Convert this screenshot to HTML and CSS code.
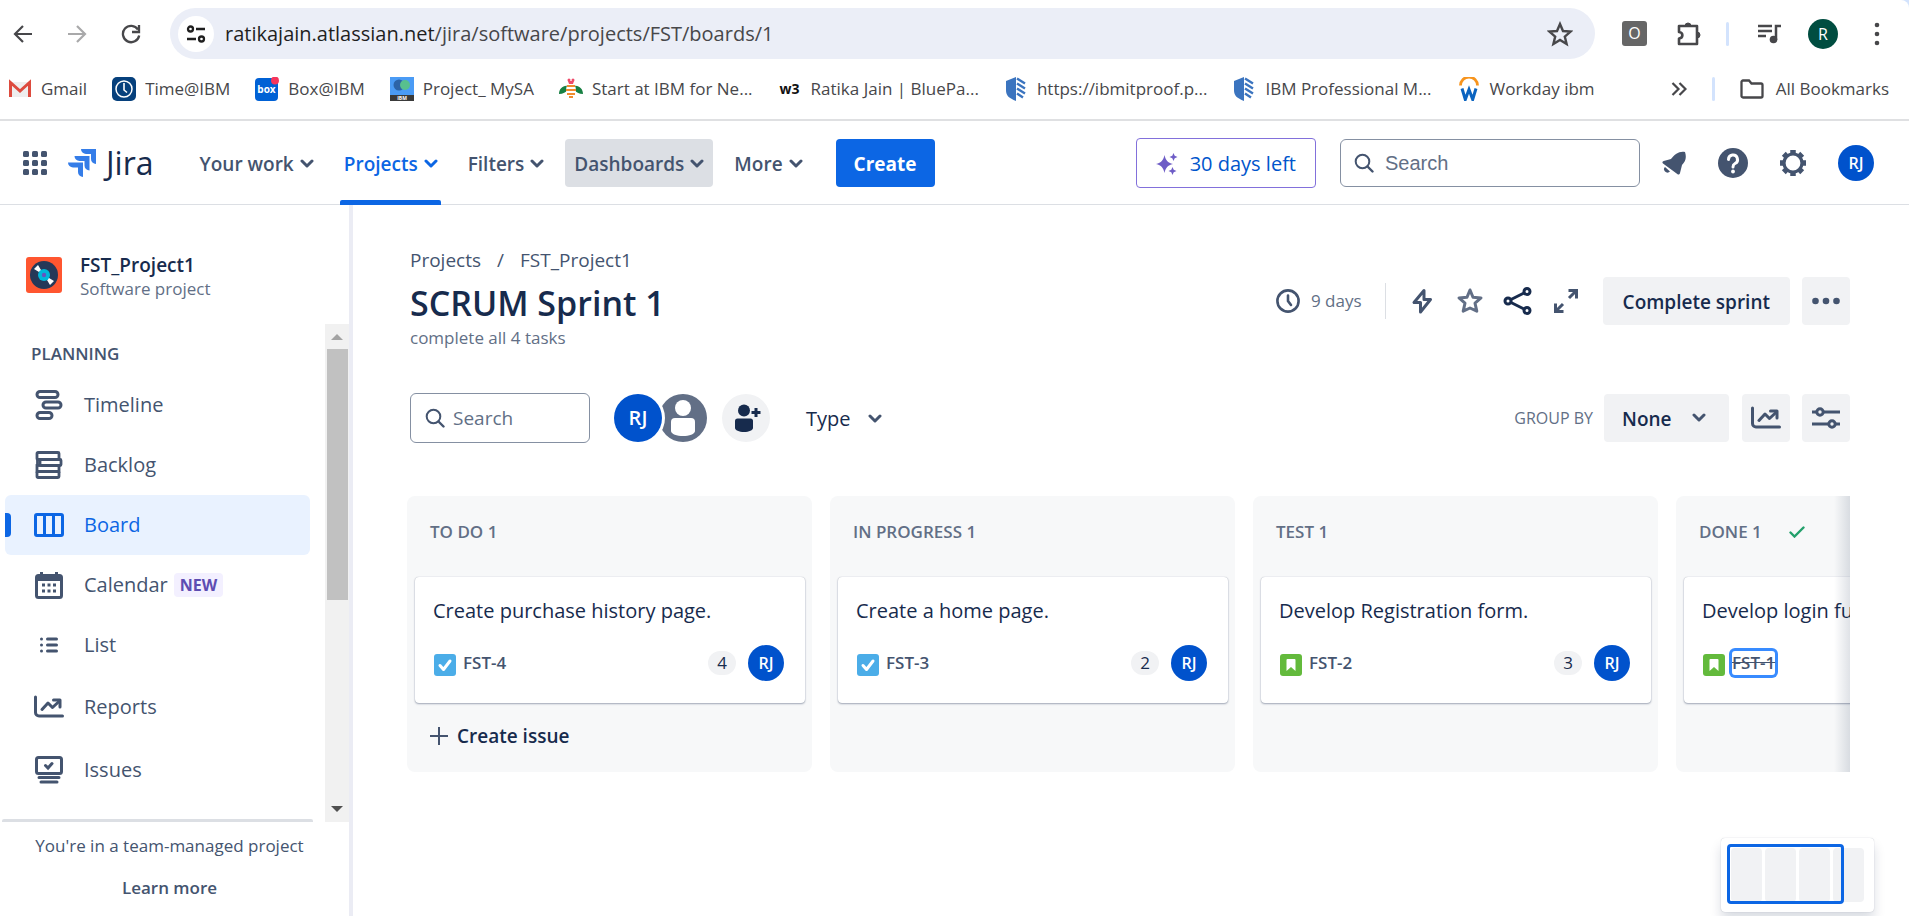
FILE: index.html
```html
<!DOCTYPE html>
<html lang="en">
<head>
<meta charset="utf-8">
<title>SCRUM Sprint 1 - Jira</title>
<link rel="stylesheet" href="styles.css">
</head>
<body>
<svg class="defs" aria-hidden="true">
  <symbol id="chev" viewBox="0 0 14 10"><path d="M2 2l5 5 5-5" fill="none" stroke="currentColor" stroke-width="3" stroke-linecap="round" stroke-linejoin="round"/></symbol>
  <symbol id="mag" viewBox="0 0 20 20"><circle cx="8.5" cy="8.5" r="6.8" fill="none" stroke="currentColor" stroke-width="2"/><path d="M13.5 13.5l5 5" stroke="currentColor" stroke-width="2.4" stroke-linecap="round"/></symbol>
  <symbol id="shield" viewBox="0 0 24 24"><path d="M12 0v24C5 21 2 19 2 13V4z" fill="#3b74bf"/><path d="M13 1.500l8 5M13 6.500l8 5M13 11.500l8 5M13 16.500l6 4" stroke="#3b74bf" stroke-width="2.400"/></symbol>
  <symbol id="chart" viewBox="0 0 30 24"><path d="M1.500 2v15.500a3.500 3.500 0 0 0 3.500 3.500H28.500M8 14.500l6-6.500 4.500 4.500L25.500 6" fill="none" stroke="currentColor" stroke-width="3" stroke-linecap="round" stroke-linejoin="round"/><path d="M19.500 5H26v7" fill="none" stroke="currentColor" stroke-width="3" stroke-linecap="round" stroke-linejoin="round"/></symbol>
  <symbol id="task" viewBox="0 0 22 22"><rect width="22" height="22" rx="3" fill="#4bade8"/><path d="M6 11.500l3.500 4L16 7" fill="none" stroke="#fff" stroke-width="3" stroke-linecap="round" stroke-linejoin="round"/></symbol>
  <symbol id="story" viewBox="0 0 22 22"><rect width="22" height="22" rx="3" fill="#63ba3c"/><path d="M6.500 6a1 1 0 0 1 1-1h7a1 1 0 0 1 1 1v11L11 13l-4.500 4z" fill="#fff"/></symbol>
</svg>

<header class="browser">
  <div class="toolbar">
    <div class="history">
      <button class="plain" aria-label="Back"><svg width="20" height="20" viewBox="0 0 20 20"><path d="M19 10H2.500M10 2L2 10l8 8" fill="none" stroke="#47474a" stroke-width="2.200"/></svg></button>
      <button class="plain" aria-label="Forward"><svg width="20" height="20" viewBox="0 0 20 20"><path d="M1 10h16.500M10 2l8 8-8 8" fill="none" stroke="#a9a9aa" stroke-width="2.200"/></svg></button>
      <button class="plain" aria-label="Reload"><svg width="20" height="20" viewBox="0 0 20 20"><path d="M17 5.500A8.200 8.200 0 1 0 18.200 11.500" fill="none" stroke="#47474a" stroke-width="2.300"/><path d="M18 1v7h-7" fill="none" stroke="#47474a" stroke-width="2.300"/></svg></button>
    </div>
    <div class="address">
      <button class="plain site" aria-label="Site information"><svg width="20" height="20" viewBox="0 0 20 20" fill="none" stroke="#1f1f1f" stroke-width="2.300"><circle cx="4.500" cy="5" r="2.500"/><path d="M10 5h9M1 15h9"/><circle cx="15.500" cy="15" r="2.500"/></svg></button>
      <span class="url"><b>ratikajain.atlassian.net</b>/jira/software/projects/FST/boards/1</span>
      <button class="plain" aria-label="Bookmark"><svg width="26" height="26" viewBox="0 0 26 26"><path d="M13 3l3 7 7.500.600-5.700 5 1.800 7.400L13 19l-6.600 4 1.800-7.400-5.700-5 7.500-.600z" fill="none" stroke="#47474a" stroke-width="2.400"/></svg></button>
    </div>
    <div class="extensions">
      <span class="ext-o">O</span>
      <button class="plain" aria-label="Extensions"><svg width="26" height="26" viewBox="0 0 26 26"><path d="M3 5h18v18H3v-5.500c4.500-.500 4.500-6 0-6.500z" fill="none" stroke="#47474a" stroke-width="2.600" stroke-linejoin="round"/><path d="M9 5a3 3 0 0 1 6 0M21 11a3 3 0 0 1 0 6" fill="#47474a" stroke="#47474a"/></svg></button>
      <i class="vbar"></i>
      <button class="plain" aria-label="Media"><svg width="26" height="24" viewBox="0 0 26 24"><path d="M2 4h14M2 9h14M2 14h8M20 18V4h5" fill="none" stroke="#47474a" stroke-width="2.500"/><circle cx="17.500" cy="17.500" r="3.800" fill="#47474a"/></svg></button>
      <span class="profile">R</span>
      <button class="plain" aria-label="Menu"><svg width="8" height="24" viewBox="0 0 8 24" fill="#47474a"><circle cx="4" cy="3" r="2.300"/><circle cx="4" cy="12" r="2.300"/><circle cx="4" cy="21" r="2.300"/></svg></button>
    </div>
  </div>
  <nav class="bookmarks" aria-label="Bookmarks">
    <a href="#"><svg width="24" height="24" viewBox="0 0 24 24"><path d="M2 5h20v15H2z" fill="#eee"/><path d="M2.500 20V5.500L12 14l9.500-8.500V20" fill="none" stroke="#dd4b3e" stroke-width="3"/></svg>Gmail</a>
    <a href="#"><svg width="24" height="24" viewBox="0 0 24 24"><rect width="24" height="24" rx="5" fill="#06407c"/><circle cx="12" cy="12" r="8" fill="none" stroke="#fff" stroke-width="1.500"/><path d="M12 6v7l3 2.500" fill="none" stroke="#fff" stroke-width="1.600"/></svg>Time@IBM</a>
    <a href="#"><svg width="24" height="24" viewBox="0 0 24 24"><rect y="1" width="23" height="23" rx="4" fill="#0061d5"/><text x="11.500" y="16" text-anchor="middle" class="logo-box">box</text><circle cx="20" cy="3.500" r="4" fill="#f5365c"/></svg>Box@IBM</a>
    <a href="#"><svg width="24" height="24" viewBox="0 0 24 24"><path fill="#4a9bf5" d="M0 0h24v24H0z"/><circle cx="9" cy="8" r="5.500" fill="#2c64a8"/><circle cx="15" cy="8" r="5" fill="#58c08e"/><path fill="#3a3a3a" d="M0 18h24v6H0z"/><text x="12" y="23" text-anchor="middle" class="logo-ibm">IBM</text></svg>Project_ MySA</a>
    <a href="#"><svg width="24" height="24" viewBox="0 0 24 24"><path d="M9 9C4 8 0 12 0 17c4 0 7-2 9-4zM15 9c5-1 9 3 9 8-4 0-7-2-9-4z" fill="#178043"/><ellipse cx="12" cy="13" rx="5" ry="7" fill="#fff"/><path d="M8 9h8M7 13h10M8 17h8M10 20h4" stroke="#f08c2e" stroke-width="2"/><path d="M9 4h6l-1 3h-4z" fill="#ee4b6a"/><circle cx="10" cy="3" r="1.500" fill="#ee4b6a"/><circle cx="14" cy="3" r="1.500" fill="#ee4b6a"/></svg>Start at IBM for Ne...</a>
    <a href="#"><span class="w3">w3</span>Ratika Jain | BluePa...</a>
    <a href="#"><svg width="24" height="24"><use href="#shield"/></svg>https://ibmitproof.p...</a>
    <a href="#"><svg width="24" height="24"><use href="#shield"/></svg>IBM Professional M...</a>
    <a href="#"><svg width="24" height="24" viewBox="0 0 24 24"><path d="M3.500 8.500a8.500 8.500 0 0 1 17 0" fill="none" stroke="#f7941d" stroke-width="2.800"/><path d="M5 11.500l3.300 11L12 12.500l3.700 10L19 11.500" fill="none" stroke="#0b64c0" stroke-width="3"/></svg>Workday ibm</a>
    <span class="bm-end">
      <button class="plain" aria-label="More bookmarks"><svg width="16" height="14" viewBox="0 0 16 14"><path d="M1.500 1l6 6-6 6M8.500 1l6 6-6 6" fill="none" stroke="#47474a" stroke-width="2.200"/></svg></button>
      <i class="vbar"></i>
      <a href="#"><svg width="24" height="20" viewBox="0 0 24 20"><path d="M1.500 3a1.500 1.500 0 0 1 1.500-1.500h6l2.500 3H21A1.500 1.500 0 0 1 22.500 6v11a1.500 1.500 0 0 1-1.500 1.500H3A1.500 1.500 0 0 1 1.500 17z" fill="none" stroke="#47474a" stroke-width="2.300"/></svg>All Bookmarks</a>
    </span>
  </nav>
</header>

<header class="appbar">
  <button class="plain apps" aria-label="Switch apps"><svg width="24" height="24" viewBox="0 0 24 24" fill="#44546f"><rect width="6" height="6" rx="1.500"/><rect x="9" width="6" height="6" rx="1.500"/><rect x="18" width="6" height="6" rx="1.500"/><rect y="9" width="6" height="6" rx="1.500"/><rect x="9" y="9" width="6" height="6" rx="1.500"/><rect x="18" y="9" width="6" height="6" rx="1.500"/><rect y="18" width="6" height="6" rx="1.500"/><rect x="9" y="18" width="6" height="6" rx="1.500"/><rect x="18" y="18" width="6" height="6" rx="1.500"/></svg></button>
  <a class="brand" href="#"><svg width="28" height="28" viewBox="0 0 28 28"><path d="M13 0h15v15a5 5 0 0 1-5-5V5h-5a5 5 0 0 1-5-5z" fill="#357de8"/><path d="M6.500 7h15v14.500a5 5 0 0 1-5-5V12h-5a5 5 0 0 1-5-5z" fill="#357de8"/><path d="M0 13.500h15V28a5 5 0 0 1-5-5v-4.500H5a5 5 0 0 1-5-5z" fill="#357de8"/></svg>Jira</a>
  <nav class="menu">
    <button class="nav-item">Your work<svg width="14" height="10"><use href="#chev"/></svg></button>
    <button class="nav-item current">Projects<svg width="14" height="10"><use href="#chev"/></svg></button>
    <button class="nav-item">Filters<svg width="14" height="10"><use href="#chev"/></svg></button>
    <button class="nav-item hovered">Dashboards<svg width="14" height="10"><use href="#chev"/></svg></button>
    <button class="nav-item">More<svg width="14" height="10"><use href="#chev"/></svg></button>
    <button class="create">Create</button>
  </nav>
  <button class="trial"><svg width="22" height="22" viewBox="0 0 22 22" fill="#6e5dc6"><path d="M8.500 2c1.300 5.500 3 7.500 8.500 9-5.500 1.500-7.200 3.500-8.500 9C7.200 14.500 5.500 12.500 0 11c5.500-1.500 7.200-3.500 8.500-9z"/><path d="M17.500 0l1.200 2.800 2.800 1.200-2.800 1.200-1.200 2.800-1.200-2.800L13.500 4l2.800-1.200zM16.500 14l1.200 2.800 2.800 1.200-2.800 1.200-1.200 2.800-1.200-2.800-2.800-1.200 2.800-1.200z"/></svg>30 days left</button>
  <label class="search global"><svg width="20" height="20"><use href="#mag"/></svg><input type="search" placeholder="Search" aria-label="Search Jira"></label>
  <div class="tools">
    <button class="plain" aria-label="Notifications"><svg width="26" height="26" viewBox="0 0 26 26" fill="#44546f"><path d="M24 2c2 6 0 10-3 13l-2 8c-.300 1.500-1.500 2-2.700 1L2 13.500c-1-.900-.700-2.200.700-2.500L10 9c4-5 8-8 14-7z"/><path d="M4 17l5 4.500c-1.500 1.500-3.500 1.500-5 0s-1.400-3.200 0-4.500z"/></svg></button>
    <button class="plain" aria-label="Help"><svg width="30" height="30" viewBox="0 0 30 30"><circle cx="15" cy="15" r="15" fill="#44546f"/><path d="M10.500 11.500a4.500 4.500 0 1 1 6.500 4c-1.500.800-2 1.500-2 3.500" fill="none" stroke="#fff" stroke-width="3" stroke-linecap="round"/><circle cx="15" cy="23.500" r="1.900" fill="#fff"/></svg></button>
    <button class="plain" aria-label="Settings"><svg width="28" height="28" viewBox="0 0 28 28"><circle cx="14" cy="14" r="9" fill="none" stroke="#44546f" stroke-width="3.200"/><g stroke="#44546f" stroke-width="5.500"><path d="M14 1v4M14 23v4M1 14h4M23 14h4"/><path d="M4.800 4.800l2.800 2.800M20.400 20.400l2.800 2.800M4.800 23.200l2.800-2.800M20.400 7.600l2.800-2.800"/></g></svg></button>
    <span class="avatar small">RJ</span>
  </div>
</header>

<div class="body">
  <aside class="sidebar">
    <div class="project">
      <svg width="36" height="36" viewBox="0 0 36 36"><rect width="36" height="36" rx="3" fill="#ff5630"/><circle cx="18" cy="18" r="14" fill="#253858"/><path d="M18 18L8 12l4-4zM18 18l10 6-4 4z" fill="#fff"/><circle cx="18" cy="18" r="6" fill="#00b8d9"/><circle cx="18" cy="18" r="2.200" fill="#6554c0"/></svg>
      <div><strong>FST_Project1</strong><span>Software project</span></div>
    </div>
    <div class="scroller">
      <nav class="side-nav">
        <h2>PLANNING</h2>
        <a href="#"><svg width="30" height="30" viewBox="0 0 30 30" fill="none" stroke="currentColor" stroke-width="3"><rect x="3" y="1.500" width="21" height="6" rx="3"/><rect x="9" y="12" width="18" height="6" rx="3"/><rect x="3" y="22.500" width="15" height="6" rx="3"/></svg>Timeline</a>
        <a href="#"><svg width="30" height="30" viewBox="0 0 30 30" fill="none" stroke="currentColor" stroke-width="2.800"><rect x="3" y="2.500" width="22" height="7" rx="1"/><rect x="6" y="9.500" width="21" height="6" rx="1"/><rect x="3" y="15.500" width="22" height="6"/><rect x="3" y="21.500" width="22" height="6" rx="1"/><path d="M3.500 9v7"/></svg>Backlog</a>
        <a href="#" class="selected"><svg width="30" height="30" viewBox="0 0 30 30" fill="none" stroke="currentColor" stroke-width="3"><rect x="1.500" y="4.500" width="27" height="21" rx="1.500"/><path d="M10.500 4v22M19.500 4v22"/></svg>Board</a>
        <a href="#"><svg width="30" height="30" viewBox="0 0 30 30"><rect x="2.500" y="5.500" width="25" height="22" rx="2" fill="none" stroke="currentColor" stroke-width="3"/><path d="M2 5h26v6H2zM6 2h3v4H6zM21 2h3v4h-3z" fill="currentColor"/><path d="M8 15h3M13.500 15h3M19 15h3M8 21h3M13.500 21h3M19 21h3" stroke="currentColor" stroke-width="3"/></svg>Calendar<em>NEW</em></a>
        <a href="#"><svg width="30" height="30" viewBox="0 0 30 30" stroke="currentColor" stroke-width="3" stroke-linecap="round"><path d="M7.500 9h0M7.500 15h0M7.500 21h0M13.500 9h9M13.500 15h9M13.500 21h9"/></svg>List</a>
        <a href="#" class="tall"><svg width="30" height="24"><use href="#chart"/></svg>Reports</a>
        <a href="#" class="tall"><svg width="30" height="30" viewBox="0 0 30 30" fill="none" stroke="currentColor" stroke-width="3" stroke-linecap="round"><rect x="2.500" y="2.500" width="25" height="16" rx="2"/><path d="M5 22.500h20M7 27h16"/><path d="M11.500 10.500l2.500 2.500 4-4.500"/></svg>Issues</a>
      </nav>
      <div class="scrollbar" aria-hidden="true">
        <svg width="12" height="6" viewBox="0 0 12 6"><path d="M6 0l6 6H0z" fill="#a3a3a3"/></svg>
        <i></i>
        <svg width="12" height="6" viewBox="0 0 12 6"><path d="M0 0h12L6 6z" fill="#505050"/></svg>
      </div>
    </div>
    <div class="side-foot">
      <p>You're in a team-managed project</p>
      <a href="#">Learn more</a>
    </div>
  </aside>

  <main class="main">
    <div class="heading">
      <div class="titles">
        <nav class="crumbs"><a href="#">Projects</a><span>/</span><a href="#">FST_Project1</a></nav>
        <h1>SCRUM Sprint 1</h1>
        <p>complete all 4 tasks</p>
      </div>
      <div class="actions">
        <span class="remaining"><svg width="24" height="24" viewBox="0 0 24 24" fill="none" stroke="#44546f" stroke-width="2.600" stroke-linecap="round"><circle cx="12" cy="12" r="10.600"/><path d="M12 6.500V12l3 4"/></svg>9 days</span>
        <div class="icons">
          <button class="plain" aria-label="Automation"><svg width="30" height="30" viewBox="0 0 30 30"><path d="M17 4.500L7 16.500h6.500v9.500l10-12.500H17z" fill="none" stroke="#44546f" stroke-width="3" stroke-linejoin="round"/></svg></button>
          <button class="plain" aria-label="Star"><svg width="30" height="30" viewBox="0 0 30 30"><path d="M15 4l3 7.300 8 .600-6 5.300 1.800 8L15 22l-6.800 3.200L10 17.200 4 11.900l8-.600z" fill="none" stroke="#626f86" stroke-width="3" stroke-linejoin="round"/></svg></button>
          <button class="plain" aria-label="Share"><svg width="30" height="30" viewBox="0 0 30 30" fill="none" stroke="#172b4d" stroke-width="3"><circle cx="5" cy="15" r="3"/><circle cx="24" cy="5.500" r="3"/><circle cx="24" cy="24.500" r="3"/><path d="M8 13.500l13-6.500M8 16.500L21 23"/></svg></button>
          <button class="plain" aria-label="Full screen"><svg width="30" height="30" viewBox="0 0 30 30" fill="none" stroke="#44546f" stroke-width="3"><path d="M18 12l7-7M12 18l-7 7"/><path d="M17.500 4.500h8v8M4.500 17.500v8h8"/></svg></button>
        </div>
        <div class="group">
          <button class="btn">Complete sprint</button>
          <button class="btn square" aria-label="More actions"><svg width="28" height="8" viewBox="0 0 28 8" fill="#44546f"><circle cx="3.500" cy="4" r="3.300"/><circle cx="14" cy="4" r="3.300"/><circle cx="24.500" cy="4" r="3.300"/></svg></button>
        </div>
      </div>
    </div>

    <div class="filters">
      <label class="search local"><svg width="20" height="20"><use href="#mag"/></svg><input type="search" placeholder="Search" aria-label="Search board"></label>
      <div class="people">
        <button class="avatar" aria-label="Filter by RJ">RJ</button>
        <button class="avatar unassigned" aria-label="Unassigned"><svg width="48" height="48" viewBox="0 0 48 48" fill="#fff"><ellipse cx="24" cy="14" rx="8" ry="8"/><path d="M12 28a4 4 0 0 1 4-4h16a4 4 0 0 1 4 4v9c0 3-6 5-12 5s-12-2-12-5z"/></svg></button>
      </div>
      <button class="avatar add" aria-label="Add people"><svg width="30" height="30" viewBox="0 0 30 30" fill="#172b4d"><circle cx="13" cy="7.500" r="6"/><path d="M4 18a2.500 2.500 0 0 1 2.500-2.500h13A2.500 2.500 0 0 1 22 18v7c0 2-4 4-9 4s-9-2-9-4z"/><path d="M25 5v9M20.500 9.500h9" stroke="#172b4d" stroke-width="3"/></svg></button>
      <button class="type">Type<svg width="14" height="10"><use href="#chev"/></svg></button>
      <div class="view">
        <label for="group">GROUP BY</label>
        <span class="select"><select id="group"><option>None</option></select><svg width="14" height="10"><use href="#chev"/></svg></span>
        <div class="group">
          <button class="btn square" aria-label="Insights"><svg width="30" height="24"><use href="#chart"/></svg></button>
          <button class="btn square" aria-label="View settings"><svg width="28" height="24" viewBox="0 0 28 24" fill="none" stroke="#44546f" stroke-width="3"><path d="M0 6h4M12 6h16M0 18h16M24 18h4"/><circle cx="8" cy="6" r="3.200"/><circle cx="20" cy="18" r="3.200"/></svg></button>
        </div>
      </div>
    </div>

    <div class="board">
      <section class="column">
        <h2>TO DO 1</h2>
        <article class="card"><p>Create purchase history page.</p><div class="meta"><svg width="22" height="22"><use href="#task"/></svg><a href="#">FST-4</a><span class="points">4</span><span class="avatar small">RJ</span></div></article>
        <button class="new-issue"><svg width="18" height="18" viewBox="0 0 18 18"><path d="M9 0v18M0 9h18" stroke="#44546f" stroke-width="2"/></svg>Create issue</button>
      </section>
      <section class="column">
        <h2>IN PROGRESS 1</h2>
        <article class="card"><p>Create a home page.</p><div class="meta"><svg width="22" height="22"><use href="#task"/></svg><a href="#">FST-3</a><span class="points">2</span><span class="avatar small">RJ</span></div></article>
      </section>
      <section class="column">
        <h2>TEST 1</h2>
        <article class="card"><p>Develop Registration form.</p><div class="meta"><svg width="22" height="22"><use href="#story"/></svg><a href="#">FST-2</a><span class="points">3</span><span class="avatar small">RJ</span></div></article>
      </section>
      <section class="column">
        <h2>DONE 1<svg width="16" height="12" viewBox="0 0 16 12"><path d="M1.500 6.500L5.500 10.500l9-9" fill="none" stroke="#22a06b" stroke-width="2.400" stroke-linecap="round"/></svg></h2>
        <article class="card"><p>Develop login fu</p><div class="meta"><svg width="22" height="22"><use href="#story"/></svg><a href="#" class="done">FST-1</a></div></article>
      </section>
    </div>
    <div class="minimap"><i></i><i></i><i></i><i></i><span></span></div>
  </main>
</div>
</body>
</html>
```

FILE: styles.css
```css
* { box-sizing: border-box; }
body {
  margin: 0;
  height: 100vh;
  display: flex;
  flex-direction: column;
  overflow: hidden;
  background: #fff;
  color: #172b4d;
  font: 20px/28px "Open Sans", "Noto Sans", sans-serif;
}
h1, h2, p { margin: 0; }
svg { display: block; flex: none; }
a { color: inherit; text-decoration: none; }
button, input, select { font: inherit; color: inherit; border: 0; margin: 0; padding: 0; }
button { display: flex; align-items: center; justify-content: center; white-space: nowrap; cursor: pointer; }
.plain { background: none; }
.defs { position: absolute; width: 0; height: 0; }
.vbar { width: 3px; height: 24px; border-radius: 2px; background: #d3e3fd; }

.browser { background: #d3e3fd; border-bottom: 2px solid #dfe0e2; }
.toolbar {
  display: flex;
  align-items: center;
  padding: 8px 28px 0 12px;
  background: #fff;
  border-top-right-radius: 8px;
}
.history { display: flex; gap: 34px; width: 158px; padding-left: 1px; }
.address {
  flex: 1;
  display: flex;
  align-items: center;
  height: 51px;
  padding: 0 22px 0 8px;
  border-radius: 26px;
  background: #ebeef7;
}
.site { width: 36px; height: 36px; border-radius: 50%; background: #fff; }
.url { flex: 1; padding-left: 11px; color: #47474a; }
.url b { font-weight: 400; color: #1f1f1f; }
.extensions { display: flex; align-items: center; margin-left: 27px; }
.extensions > * { flex: none; }
.ext-o {
  width: 25px;
  margin-right: 29px;
  border-radius: 3px;
  background: #666;
  color: #fff;
  font-size: 16px;
  line-height: 25px;
  text-align: center;
}
.extensions .vbar { margin: 0 27px 0 24px; }
.profile {
  width: 30px;
  margin: 0 35px 0 26px;
  border-radius: 50%;
  background: #004d40;
  color: #fff;
  font-size: 16px;
  line-height: 30px;
  text-align: center;
}
.bookmarks {
  display: flex;
  align-items: center;
  gap: 25px;
  height: 60px;
  padding: 0 20px 0 8px;
  background: #fff;
  color: #47474a;
  font-size: 17px;
  white-space: nowrap;
}
.bookmarks a { display: flex; align-items: center; gap: 9px; }
.bm-end { display: flex; align-items: center; gap: 25px; margin-left: auto; }
.bookmarks .bm-end a { gap: 12px; }
.w3 { width: 24px; color: #111; font-size: 14px; font-weight: 700; text-align: center; }
.logo-box { fill: #fff; font-size: 10px; font-weight: 700; }
.logo-ibm { fill: #fff; font-size: 5px; font-weight: 700; }

.appbar {
  display: flex;
  align-items: center;
  height: 84px;
  flex: none;
  padding: 0 35px 0 23px;
  border-bottom: 1px solid #dcdfe4;
  color: #44546f;
}
.brand { display: flex; align-items: center; gap: 10px; margin: 0 37px 0 21px; color: #172b4d; font: 32px/36px "Open Sans", sans-serif; }
.menu { display: flex; align-items: center; gap: 12px; align-self: stretch; }
.nav-item {
  position: relative;
  gap: 6px;
  height: 48px;
  padding: 2px 9px 0;
  border-radius: 4px;
  background: none;
  font-size: 19px;
  font-weight: 600;
}
.hovered { background: #dcdfe4; }
.current { color: #0c66e4; }
.current::after {
  content: "";
  position: absolute;
  left: 5px;
  right: 6px;
  bottom: -18px;
  height: 5px;
  border-radius: 2px 2px 0 0;
  background: #0c66e4;
}
.create { height: 48px; margin-left: 12px; padding: 2px 18px 0; border-radius: 4px; background: #0c66e4; color: #fff; font-size: 19px; font-weight: 700; }
.trial { gap: 12px; height: 50px; margin-left: auto; padding: 2px 19px 0; border: 1px solid #8270db; border-radius: 4px; background: #fff; color: #0055cc; }
.search { display: flex; align-items: center; border: 1px solid #8590a2; border-radius: 6px; color: #44546f; }
.search input { width: 100%; min-width: 0; background: none; outline: 0; }
.search input::placeholder { color: #626f86; opacity: 1; }
.global { width: 300px; height: 48px; margin: 0 21px 0 24px; padding: 0 13px; gap: 11px; font-family: "Liberation Sans", sans-serif; }
.tools { display: flex; align-items: center; gap: 31px; }
.avatar {
  flex: none;
  width: 48px;
  height: 48px;
  border-radius: 50%;
  background: #0052cc;
  color: #fff;
  font-size: 20px;
  font-weight: 600;
  text-align: center;
}
.avatar.small { width: 36px; height: 36px; font-size: 16px; line-height: 36px; }

.body { flex: 1; display: flex; min-height: 0; }
.sidebar {
  flex: none;
  display: flex;
  flex-direction: column;
  width: 353px;
  border-right: 4px solid #ebecf4;
  color: #44546f;
}
.project { display: flex; align-items: center; gap: 18px; height: 119px; padding: 24px 0 0 26px; }
.project strong { display: block; color: #172b4d; font-size: 19px; font-weight: 600; line-height: 23px; }
.project span { display: block; color: #626f86; font-size: 17px; line-height: 23px; }
.project svg { margin-top: -4px; }
.scroller { flex: none; display: flex; justify-content: space-between; height: 498px; }
.side-nav { flex: 1; padding: 15px 15px 0 5px; }
.side-nav h2 { height: 36px; padding: 0 26px; font-size: 17px; font-weight: 600; line-height: 30px; }
.side-nav a { position: relative; display: flex; align-items: center; gap: 20px; height: 60px; padding-left: 29px; border-radius: 6px; }
.side-nav a.tall { height: 63px; }
.side-nav em { margin-left: -14px; padding: 0 6px; border-radius: 4px; background: #f3f0ff; color: #5e4db2; font-size: 16px; font-style: normal; font-weight: 700; line-height: 24px; }
.side-nav .selected { background: #e9f2ff; color: #0c66e4; }
.selected::before { content: ""; position: absolute; left: 0; top: 18px; width: 6px; height: 24px; border-radius: 0 4px 4px 0; background: #0c66e4; }
.scrollbar { display: flex; flex-direction: column; align-items: center; width: 24px; padding: 10px 0; background: #f1f1f1; }
.scrollbar i { width: 21px; height: 251px; margin: 9px 0 auto; background: #c1c1c1; }
.side-foot { width: 311px; margin: -3px 0 0 2px; padding: 10px 0 0 24px; border-top: 3px solid #dcdfe4; border-radius: 2px; text-align: center; font-size: 17px; white-space: nowrap; }
.side-foot a { display: block; padding-top: 14px; font-weight: 600; }

.main { position: relative; flex: 1; min-width: 0; padding: 41px 59px 0 57px; }
.heading { display: flex; justify-content: space-between; }
.crumbs { display: flex; gap: 16px; color: #44546f; font-size: 19px; }
h1 { margin-top: 9px; font-size: 34px; font-weight: 600; line-height: 40px; }
.titles p { color: #626f86; font-size: 17px; line-height: 30px; }
.actions { display: flex; align-items: center; height: 48px; margin-top: 31px; }
.remaining { display: flex; align-items: center; gap: 11px; height: 36px; padding-right: 23px; border-right: 1px solid #dcdfe4; color: #626f86; font-size: 17px; }
.icons { display: flex; gap: 18px; margin: 0 22px 0 21px; }
.group { display: flex; gap: 12px; }
.btn { height: 48px; padding: 2px 20px 0; border-radius: 4px; background: #f1f2f4; font-size: 19px; font-weight: 600; }
.btn.square { width: 48px; padding: 0; color: #44546f; }

.filters { display: flex; align-items: center; height: 50px; margin-top: 40px; }
.local { width: 180px; height: 50px; margin-right: 24px; padding: 0 14px; gap: 8px; font-size: 19px; }
.people { display: flex; }
.people .avatar:first-child { position: relative; box-shadow: 0 0 0 3px #fff; }
.unassigned { margin-left: -3px; background: #626f86; }
.add { margin: 0 36px 0 15px; background: #f1f2f4; }
.type { gap: 17px; padding-top: 2px; background: none; }
.type svg, .select svg { color: #44546f; }
.view { display: flex; align-items: center; margin-left: auto; }
.view label { margin-right: 11px; color: #626f86; font-size: 16px; }
.select { position: relative; margin-right: 13px; }
.select select { display: block; appearance: none; width: 125px; height: 48px; padding: 2px 18px 0; border-radius: 4px; background: #f1f2f4; font-size: 19px; font-weight: 600; }
.select svg { position: absolute; right: 23px; top: 19px; pointer-events: none; }

.board { position: relative; display: flex; gap: 18px; margin: 53px 0 0 -3px; overflow: hidden; }
.board::after { content: ""; position: absolute; top: 0; right: 0; bottom: 0; width: 16px; background: linear-gradient(to left, rgba(9, 30, 66, .13), rgba(9, 30, 66, 0)); }
.column { flex: none; width: 405px; height: 276px; padding: 0 7px 0 8px; border-radius: 8px; background: #f7f8f9; }
.column h2 { display: flex; align-items: center; gap: 27px; height: 81px; padding: 0 15px 9px; color: #626f86; font-size: 17px; font-weight: 600; }
.card { height: 126px; padding: 20px 21px 0 18px; border-radius: 4px; background: #fff; box-shadow: 0 1px 2px rgba(9, 30, 66, .35), 0 0 1px rgba(9, 30, 66, .3); }
.card p { white-space: nowrap; }
.meta { display: flex; align-items: center; height: 36px; margin-top: 20px; }
.meta svg { margin: 4px 0 0 1px; }
.meta a { margin-left: 7px; color: #44546f; font-size: 17px; font-weight: 600; line-height: 24px; }
.meta .done { border-radius: 3px; box-shadow: 0 0 0 3px #388bff; text-decoration: line-through; }
.points { min-width: 28px; margin: 0 12px 0 auto; border-radius: 12px; background: #f1f2f4; font-size: 17px; line-height: 24px; text-align: center; }
.new-issue { gap: 9px; height: 48px; margin: 9px 0 0 15px; background: none; font-size: 19px; font-weight: 600; }
.minimap { position: absolute; right: 35px; bottom: 4px; display: flex; gap: 3px; height: 74px; padding: 10px; border-radius: 4px; background: #fff; box-shadow: 0 8px 12px rgba(9, 30, 66, .15), 0 0 1px rgba(9, 30, 66, .31); }
.minimap i { width: 31px; border-radius: 4px; background: #f1f2f4; }
.minimap span { position: absolute; left: 6px; top: 6px; width: 117px; height: 60px; border: 3px solid #0c66e4; border-radius: 4px; }
```
